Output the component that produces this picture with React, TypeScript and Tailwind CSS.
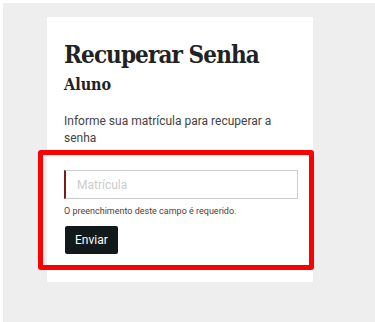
export default function App() {
  return (
    <div className="relative w-[375px] h-[322px] bg-white pl-[3px] pt-[3px]" style={{ fontFamily: "Roboto, 'Liberation Sans', sans-serif" }}>
      <div className="h-full w-full bg-[#eeeeee] pl-[44px] pt-[14px]">
        <div className="w-[266px] h-[265px] bg-white pl-[17px] pr-[15px] pt-[24px]">
          <h1 className="text-[24px] leading-[28px] font-bold text-[#222222] [font-family:'DejaVu_Serif_Condensed','DejaVu_Serif',serif] font-stretch-condensed tracking-[-0.9px]">
            Recuperar Senha
          </h1>
          <h2 className="mt-[6px] text-[16px] leading-[20px] font-bold text-[#222222] [font-family:'DejaVu_Serif_Condensed','DejaVu_Serif',serif] font-stretch-condensed">
            Aluno
          </h2>
          <p className="mt-[18px] text-[12px] leading-[17px] text-[#444444]">
            Informe sua matrícula para recuperar a senha
          </p>
          <input
            placeholder="Matrícula"
            className="mt-[23px] block w-[234px] h-[29px] border border-[#cccccc] border-l-2 border-l-[#7a1c1c] pl-[11px] text-[12px] placeholder:text-[#cccccc] outline-none"
          />
          <p className="mt-[6px] text-[9px] leading-[12px] text-[#5a3b2e]">
            O preenchimento deste campo é requerido.
          </p>
          <button className="mt-[9px] ml-[1px] h-[28px] px-[10px] bg-[#12191b] text-white text-[12px] rounded-[2px]">
            Enviar
          </button>
        </div>
      </div>
      <div className="absolute left-[38px] top-[150px] w-[276px] h-[120px] border-[5px] border-[#ff0000] rounded-[3px] pointer-events-none" />
    </div>
  );
}
